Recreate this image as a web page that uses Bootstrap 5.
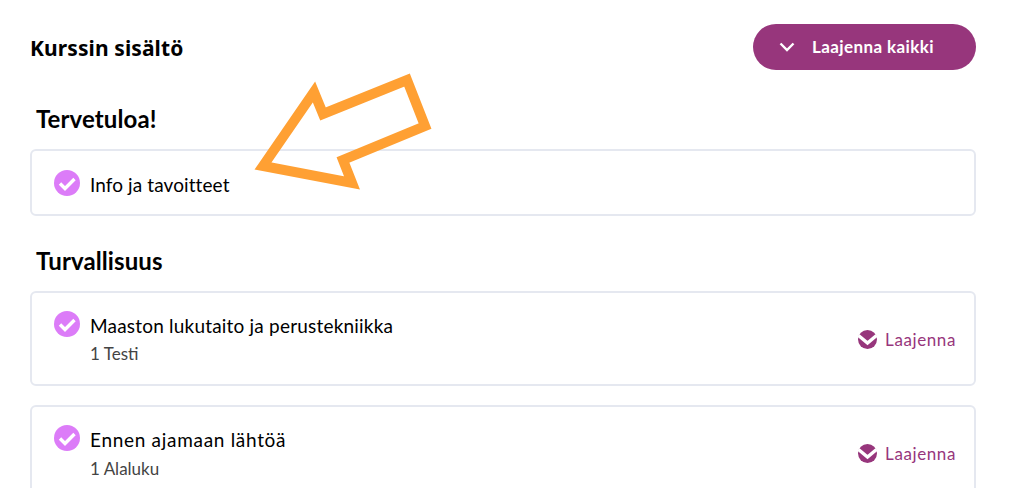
<!DOCTYPE html>
<html lang="fi">
<head>
<meta charset="utf-8">
<title>Kurssin sisältö</title>
<link href="https://cdn.jsdelivr.net/npm/bootstrap@5.3.0/dist/css/bootstrap.min.css" rel="stylesheet">
<style>
html,body{height:488px;overflow:hidden;background:#fff}
body{font-family:"Lato","Noto Sans",sans-serif;color:#000;position:relative}
.page-wrap{padding:24px 48px 0 30px}
.page-title{font-family:"Noto Sans",sans-serif;font-size:21px;font-weight:700;margin:0;line-height:48px;letter-spacing:.1px}
.top-bar{margin-bottom:31px}
.expand-all{background:#97367c;color:#fff;border:0;border-radius:23px;width:223px;height:46px;font-size:17px;letter-spacing:.4px;font-weight:700;padding:0 0 0 26px;gap:17px}
.expand-all:hover{background:#97367c;color:#fff}
.sect-title{font-size:24px;font-weight:700;line-height:32px;margin:0 0 14px 6px;letter-spacing:.1px}
.course-box{border:2px solid #e5e8f0;border-radius:6px;padding:20px 18px 0 22px;margin-bottom:19px}
.box-one{height:67px;margin-bottom:29px}
.box-two{height:95px}
.box-three{height:110px;margin-bottom:0}
.course-name{font-size:19px;letter-spacing:.2px;line-height:28px;margin-left:10px}
.name-tight{letter-spacing:.1px}
.name-wide{letter-spacing:.7px}
.course-sub{font-size:17px;line-height:22px;color:#444;margin:3px 0 0 10px}
.box-three .course-sub{margin-top:4px}
.box-two .course-name,.box-three .course-name{margin-top:-1px}
.expand-link{color:#97367c;font-size:17px;letter-spacing:.6px;gap:8px;margin-top:14px}
.check-ic{flex:none;margin-top:-1px}
.box-two .check-ic,.box-three .check-ic{margin-top:-2px}
.arrow-over{position:absolute;left:0;top:0;pointer-events:none}
</style>
</head>
<body>
<div class="page-wrap">
  <div class="top-bar d-flex justify-content-between align-items-start">
    <h1 class="page-title">Kurssin sisältö</h1>
    <button class="btn expand-all d-flex align-items-center" type="button">
      <svg width="16" height="10" viewBox="0 0 16 10"><path d="M1.5 1.5 8 8l6.500-6.500" fill="none" stroke="#fff" stroke-width="2.400"/></svg>
      <span>Laajenna kaikki</span>
    </button>
  </div>

  <h2 class="sect-title">Tervetuloa!</h2>
  <div class="course-box box-one d-flex align-items-start">
    <svg class="check-ic" width="26" height="26" viewBox="0 0 26 26"><circle cx="13" cy="13" r="13" fill="#dc7cf8"/><path d="M6 13.500l5 5L20.500 9" fill="none" stroke="#fff" stroke-width="3.400"/></svg>
    <div class="course-name name-tight">Info ja tavoitteet</div>
  </div>

  <h2 class="sect-title">Turvallisuus</h2>
  <div class="course-box box-two d-flex justify-content-between align-items-start">
    <div class="d-flex align-items-start">
      <svg class="check-ic" width="26" height="26" viewBox="0 0 26 26"><circle cx="13" cy="13" r="13" fill="#dc7cf8"/><path d="M6 13.500l5 5L20.500 9" fill="none" stroke="#fff" stroke-width="3.400"/></svg>
      <div>
        <div class="course-name">Maaston lukutaito ja perustekniikka</div>
        <div class="course-sub">1 Testi</div>
      </div>
    </div>
    <div class="expand-link d-flex align-items-center">
      <svg width="19" height="19" viewBox="0 0 19 19"><circle cx="9.500" cy="9.500" r="9.500" fill="#97367c"/><path d="M0.500 5.500 9.500 13 18.500 5.500" fill="none" stroke="#fff" stroke-width="3.400"/></svg>
      <span>Laajenna</span>
    </div>
  </div>
  <div class="course-box box-three d-flex justify-content-between align-items-start">
    <div class="d-flex align-items-start">
      <svg class="check-ic" width="26" height="26" viewBox="0 0 26 26"><circle cx="13" cy="13" r="13" fill="#dc7cf8"/><path d="M6 13.500l5 5L20.500 9" fill="none" stroke="#fff" stroke-width="3.400"/></svg>
      <div>
        <div class="course-name name-wide">Ennen ajamaan lähtöä</div>
        <div class="course-sub">1 Alaluku</div>
      </div>
    </div>
    <div class="expand-link d-flex align-items-center">
      <svg width="19" height="19" viewBox="0 0 19 19"><circle cx="9.500" cy="9.500" r="9.500" fill="#97367c"/><path d="M0.500 5.500 9.500 13 18.500 5.500" fill="none" stroke="#fff" stroke-width="3.400"/></svg>
      <span>Laajenna</span>
    </div>
  </div>
</div>
<svg class="arrow-over" width="1024" height="488" viewBox="0 0 1024 488"><polygon points="263,166 314,92 323,114 407,80 425,126 343,160 352,183" fill="none" stroke="#ffa033" stroke-width="10" stroke-miterlimit="10"/></svg>
<script src="https://cdn.jsdelivr.net/npm/bootstrap@5.3.0/dist/js/bootstrap.bundle.min.js"></script>
</body>
</html>
